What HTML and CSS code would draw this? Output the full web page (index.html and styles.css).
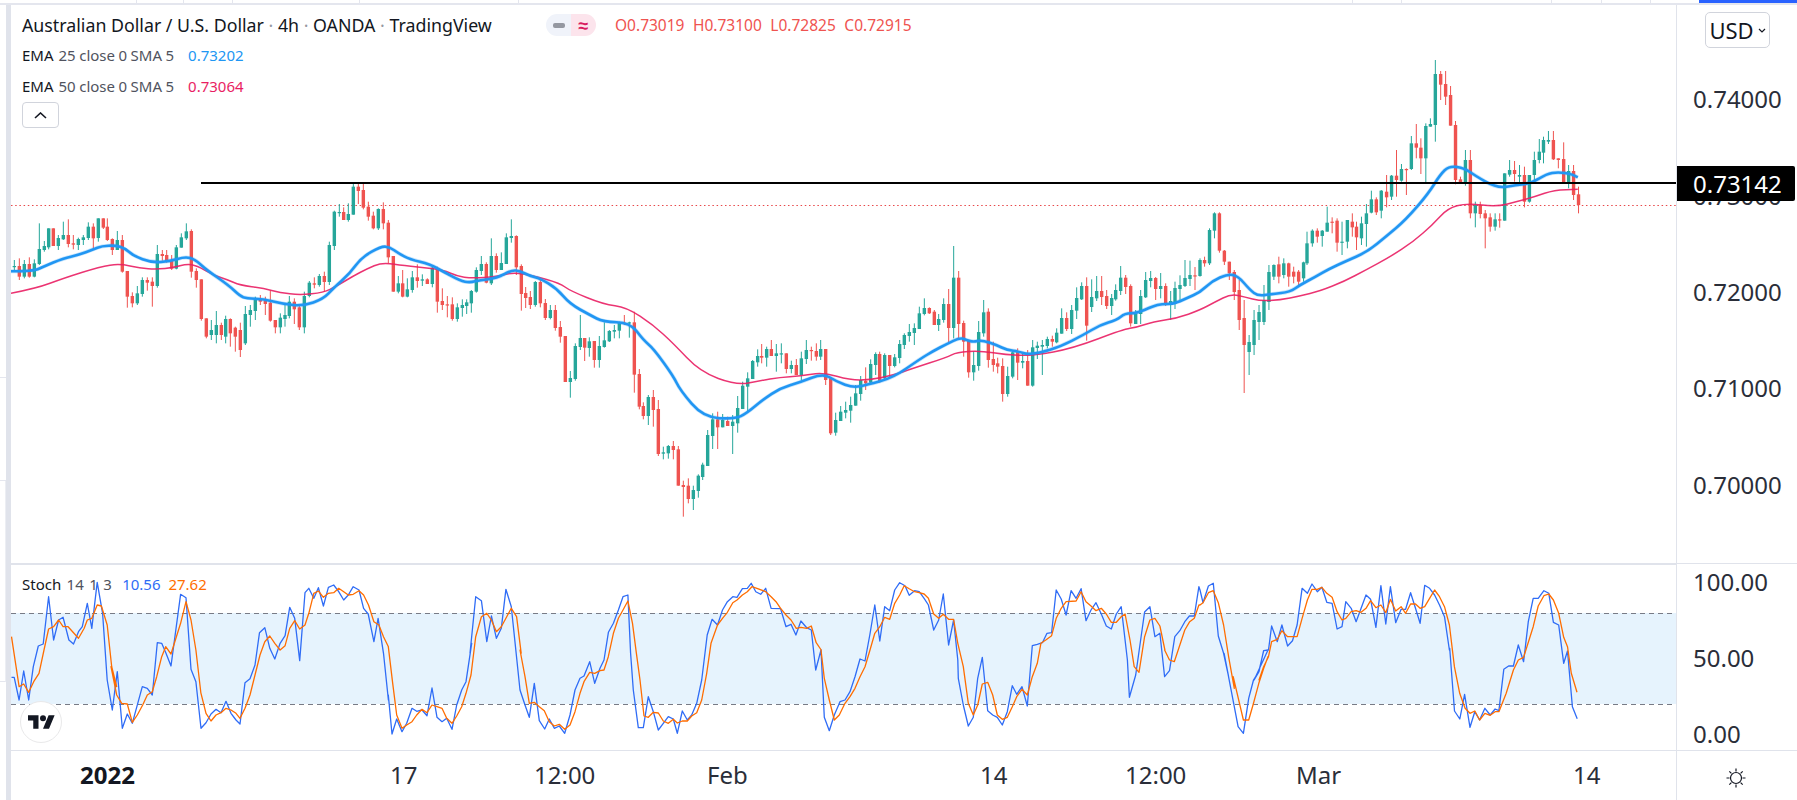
FILE: index.html
```html
<!DOCTYPE html>
<html lang="en">
<head>
<meta charset="utf-8">
<title>AUD/USD chart</title>
<link rel="stylesheet" href="styles.css">
</head>
<body>
<div class="app">
  <div class="topbar">
    <i class="tc c1"></i><i class="tc c2"></i><i class="tc c3"></i><i class="tc c4"></i><i class="tc c5"></i>
    <i class="tc c6"></i><i class="tc c7"></i><i class="tc c8"></i><i class="tc c9"></i><i class="tc c10"></i>
    <b class="progress"></b>
  </div>
  <div class="workspace">
    <div class="rail">
      <i class="rail-cell r1"></i><i class="rail-cell r2"></i><i class="rail-cell r3"></i><i class="rail-cell r4"></i>
    </div>
    <div class="rail-strip"></div>
    <div class="chart">
      <div class="plot">
        <svg class="canvas" viewBox="11 4 1665 746" width="1665" height="746" xmlns="http://www.w3.org/2000/svg">
          <rect class="band" x="11" y="613" width="1665" height="91"/>
          <line class="level" x1="11" y1="613.5" x2="1676" y2="613.5"/>
          <line class="level" x1="11" y1="704.5" x2="1676" y2="704.5"/>
          <line class="last-price" x1="11" y1="205.5" x2="1676" y2="205.5"/>
          <g id="candles"></g>
          <path id="ema50" class="ema50"/>
          <path id="ema25halo" class="ema25halo"/>
          <path id="ema25" class="ema25"/>
          <line class="trend" x1="201" y1="183" x2="1676" y2="183"/>
          <path id="stochK" class="stoch-k"/>
          <path id="stochD" class="stoch-d"/>
        </svg>
        <div class="legend">
          <div class="title-row">
            <span class="title">Australian Dollar / U.S. Dollar <em>·</em> 4h <em>·</em> OANDA <em>·</em> TradingView</span>
            <span class="pills"><span class="pill pill-grey"><i></i></span><span class="pill pill-pink">≈</span></span>
            <span class="ohlc">O0.73019 H0.73100 L0.72825 C0.72915</span>
          </div>
          <div class="study"><span class="nm">EMA</span> 25 close 0 SMA 5 <span class="val v-blue">0.73202</span></div>
          <div class="study"><span class="nm">EMA</span> 50 close 0 SMA 5 <span class="val v-pink">0.73064</span></div>
          <button class="collapse" type="button" aria-label="Collapse">
            <svg width="13" height="7" viewBox="0 0 13 7"><path d="M1 6l5.5-5L12 6" fill="none" stroke="#131722" stroke-width="1.6"/></svg>
          </button>
        </div>
        <div class="divider"></div>
        <div class="stoch-legend"><span class="nm">Stoch</span> 14 1 3 <span class="val v-k">10.56</span> <span class="val v-d">27.62</span></div>
        <div class="tv-logo">
          <svg width="27" height="14" viewBox="0 0 36 18" xmlns="http://www.w3.org/2000/svg"><path fill="#131722" d="M14 18H7V7H0V0h14v18zM28 18h-8L27.500 0h8L28 18z"/><circle fill="#131722" cx="20" cy="4" r="4"/></svg>
        </div>
      </div>
      <div class="price-axis">
        <button class="currency" type="button">USD<svg width="8" height="5" viewBox="0 0 8 5"><path d="M1 1l3 3 3-3" fill="none" stroke="#131722" stroke-width="1.2"/></svg></button>
        <div class="price-scale">
          <span>0.74000</span><span>0.73000</span><span>0.72000</span><span>0.71000</span><span>0.70000</span>
        </div>
        <div class="last-tag">0.73142</div>
        <div class="stoch-scale">
          <span>100.00</span><span>50.00</span><span>0.00</span>
        </div>
      </div>
      <div class="time-axis">
        <span class="year">2022</span><span>17</span><span>12:00</span><span>Feb</span><span>14</span><span>12:00</span><span>Mar</span><span>14</span>
      </div>
      <div class="corner">
        <svg width="22" height="22" viewBox="0 0 22 22" xmlns="http://www.w3.org/2000/svg">
          <g fill="none" stroke="#131722" stroke-width="1.2"><circle cx="11" cy="11" r="5.500"/><path d="M11 1.500v3M11 17.500v3M1.500 11h3M17.500 11h3M4.300 4.300l2.100 2.100M15.600 15.600l2.100 2.100M4.300 17.700l2.100-2.100M15.600 6.400l2.100-2.100"/></g>
        </svg>
      </div>
    </div>
  </div>
</div>
<script src="script.js"></script>
</body>
</html>
```
FILE: styles.css
```css
* { box-sizing: border-box; }
html, body { margin: 0; padding: 0; background: #fff; }
body { width: 1797px; height: 800px; overflow: hidden; font-family: "Noto Sans", "Liberation Sans", sans-serif; color: #131722; }
.app { display: flex; flex-direction: column; width: 1797px; height: 800px; }

.topbar { position: relative; display: flex; height: 5px; flex: none; border-bottom: 2px solid #e4e6ee; }
.tc { display: block; height: 3px; border-right: 1px solid #e4e6ee; flex: none; }
.c1 { width: 137px; } .c2 { width: 47px; } .c3 { width: 49px; } .c4 { width: 127px; } .c5 { width: 159px; }
.c6 { width: 834px; } .c7 { width: 49px; } .c8 { width: 150px; } .c9 { width: 50px; } .c10 { width: 49px; }
.progress { position: absolute; right: 0; top: 0; width: 98px; height: 3px; background: #2962ff; }

.workspace { display: flex; flex: 1; min-height: 0; }
.rail { width: 6px; flex: none; display: flex; flex-direction: column; }
.rail-cell { display: block; border-bottom: 1px solid #e4e6ee; }
.r1 { height: 373px; } .r2 { height: 103px; } .r3 { height: 201px; border-right: 1px solid #eceef3; } .r4 { flex: 1; border-bottom: 0; }
.rail-strip { width: 5px; flex: none; background: #e0e3eb; }

.chart { display: grid; grid-template-columns: 1665px 121px; grid-template-rows: 745px 50px; flex: 1; }
.plot { position: relative; grid-column: 1; grid-row: 1; }
.canvas { position: absolute; left: 0; top: -1px; display: block; overflow: hidden; }
.divider { position: absolute; left: 0; right: 0; top: 558px; height: 1.500px; background: #e0e3eb; }

.band { fill: #e6f3fd; }
.level { stroke: #787b86; stroke-width: 1; stroke-dasharray: 5 4; }
.last-price { stroke: #e8484a; stroke-width: 1; stroke-dasharray: 1.500 2.700; }
.trend { stroke: #000; stroke-width: 2; }
.ema25 { fill: none; stroke: #2196f3; stroke-width: 2.600; stroke-linejoin: round; }
.ema25halo { fill: none; stroke: #2196f3; stroke-opacity: .25; stroke-width: 4; stroke-linejoin: round; }
.ema50 { fill: none; stroke: #e91e63; stroke-width: 1.500; stroke-linejoin: round; stroke-opacity: .9; }
.stoch-k { fill: none; stroke: #2f6cf6; stroke-width: 1.300; stroke-linejoin: round; }
.stoch-d { fill: none; stroke: #ff6d00; stroke-width: 1.300; stroke-linejoin: round; }
.up { fill: #26a69a; }
.down { fill: #ef5350; }

.legend { position: absolute; left: 11px; top: 0; }
.title-row { display: flex; align-items: center; height: 34px; padding-top: 6px; white-space: nowrap; }
.title { font-size: 17.800px; width: 524px; flex: none; }
.title em { font-style: normal; color: #9598a1; }
.pills { display: flex; width: 50px; height: 22px; flex: none; }
.pill { width: 25px; display: flex; align-items: center; justify-content: center; }
.pill-grey { background: #f0f3fa; border-radius: 11px 0 0 11px; }
.pill-grey i { display: block; width: 12px; height: 5px; border-radius: 2px; background: #9598a1; }
.pill-pink { background: #fce4ec; border-radius: 0 11px 11px 0; color: #d81b60; font-size: 18px; font-weight: 700; line-height: 22px; }
.ohlc { margin-left: 19px; font-size: 15.500px; color: #ef5350; word-spacing: 4.500px; }
.study { display: flex; gap: 5px; height: 31px; align-items: center; font-size: 15px; color: #50535e; white-space: nowrap; word-spacing: -0.400px; }
.nm { color: #131722; }
.val { margin-left: 9px; }
.v-blue { color: #2196f3; }
.v-pink { color: #e91e63; }
.collapse { display: flex; align-items: center; justify-content: center; width: 37px; height: 26px; margin-top: 1px; padding: 0; background: #fff; border: 1px solid #d1d4dc; border-radius: 4px; }
.stoch-legend { position: absolute; left: 11px; top: 569px; font-size: 15px; color: #50535e; white-space: nowrap; word-spacing: 1.500px; }
.stoch-legend .val { margin-left: 5px; }
.stoch-legend .v-k { color: #2f6cf6; }
.stoch-legend .v-d { color: #ff6d00; margin-left: 2.500px; }
.tv-logo { position: absolute; left: 9px; top: 696px; width: 42px; height: 42px; display: flex; align-items: center; justify-content: center; border-radius: 50%; background: #fff; border: 1.500px solid #e9e9ea; }
.tv-logo svg { display: block; }

.price-axis { position: relative; grid-column: 2; grid-row: 1; display: flex; flex-direction: column; border-left: 1px solid #e0e3eb; font-size: 24px; color: #2a2e39; }
.price-scale { display: flex; flex-direction: column; height: 559px; padding-top: 46.300px; border-bottom: 1.500px solid #e0e3eb; }
.price-scale span { display: block; height: 96.400px; line-height: 96.400px; padding-left: 16px; }
.stoch-scale { display: flex; flex-direction: column; gap: 46px; padding-top: 3px; padding-left: 16px; }
.stoch-scale span { display: block; height: 30px; line-height: 30px; }
.last-tag { position: absolute; left: 0; top: 161px; width: 118px; height: 35px; line-height: 35px; padding-left: 16px; background: #000; color: #fff; border-radius: 0 2px 2px 0; }
.currency { position: absolute; left: 28px; top: 7px; width: 65px; height: 36px; display: flex; align-items: center; justify-content: center; gap: 4px; padding: 0; background: #fff; border: 1px solid #d1d4dc; border-radius: 5px; font: 22px "Noto Sans", sans-serif; color: #131722; }

.time-axis { grid-column: 1; grid-row: 2; display: grid; grid-template-columns: 310px 144px 173px 273px 145px 171px 277px 40px; padding-left: 69px; padding-bottom: 2px; align-items: center; height: 50px; border-top: 1.500px solid #e0e3eb; font-size: 24px; color: #2a2e39; white-space: nowrap; }
.year { font-weight: 700; color: #131722; }
.corner { grid-column: 2; grid-row: 2; display: flex; align-items: center; justify-content: center; height: 50px; border-top: 1.500px solid #e0e3eb; border-left: 1px solid #e0e3eb; padding-right: 2px; padding-top: 4px; }
```
FILE: script.js
```js
// Chart data, traced as coordinates on the plot. Each run gives its own frame: [x0, sx, y0, sy].
var F = {
  f: [0, 1, 0, 1],
  a: [0, 3, 170, 3], b: [400, 3, 170, 3], c: [560, 3, 340, 3], d: [800, 3, 170, 3], e: [1200, 2.626, 0, 3],
  s: [0, 2.613, 480, 3], t: [0, 3, 640, 3], u: [600, 2.613, 490, 3], v: [520, 3, 640, 3], w: [1200, 2.626, 480, 3], x: [1040, 2.07, 640, 3]
};

var candleRuns = [
  ['a', 'g43 270 288 290 305;r58 265 288 320 330;g73 270 282 320 325;r88 262 282 320 323;g103 268 280 320 322;g118 160 237 282 285;g133 213 228 240 245;g146 175 175 232 238;r160 175 175 228 228;g175 195 204 228 240;g190 155 195 208 210;r205 148 195 222 232;r220 195 220 224 238;g235 203 207 225 240;g250 195 202 210 225;g265 157 170 204 210;r280 160 170 205 240;g295 145 145 204 215;r310 145 145 173 177;r322 145 170 210 213;r337 205 207 240 255;g352 183 210 240 240;r367 195 210 305 308;r382 303 303 380 413;r397 367 378 400 412;g412 348 370 400 405;g427 322 330 372 380;r442 322 330 338 362;r457 322 335 348 410;g472 225 252 348 353;r487 240 252 258 272;r500 240 255 275 278;r515 255 270 296 300;g529 225 232 296 298;g544 190 202 233 233;g559 160 184 205 210;r574 178 183 305 323;r589 295 303 330 353;r604 328 328 447 452;r619 445 445 500 505;g634 450 480 495 510;g649 423 465 495 520;r664 458 465 495 510;g677 437 447 500 520;r691 445 447 490 530;r706 470 473 500 545;r721 458 480 540 561;g736 408 432 520 525;g751 405 420 435 470;g766 380 388 423 450;r781 375 388 395 405;r796 380 392 402 435;r811 362 398 452 455;r826 450 450 472 490;g841 430 443 472 490;g855 400 435 447 470;g868 378 395 438 445;r883 385 395 418 462;r898 405 412 472 480;g913 365 378 472 490;g928 333 338 378 382;r943 322 340 344 355;g958 312 318 345 350;r973 305 318 336 365;g988 215 225 336 345;g1003 122 125 228 240;g1018 102 126 128 140;r1031 112 126 150 150;g1045 100 132 150 155;g1060 40 50 134 134;r1075 40 50 63 102;r1090 40 60 113 118;r1105 95 110 140 152;r1120 125 137 175 178;g1135 115 117 175 180;r1150 97 117 160 178;r1165 150 158 262 280;r1180 258 258 365 365;g1195 318 340 365 370'],
  ['b', 'r8 300 340 380 382;g22 325 358 380 382;g37 303 322 360 368;r52 283 322 333 353;g67 313 328 332 348;r82 325 328 342 342;g97 288 293 342 352;r112 290 295 395 428;r127 355 393 405 420;r142 378 403 404 442;r157 382 403 447 452;g172 400 412 447 455;g187 388 405 414 440;g200 388 397 408 432;g214 360 363 400 428;g229 292 300 365 368;g244 258 282 303 315;r259 277 282 338 340;g274 205 258 340 345;r289 250 258 300 308;g304 247 279 300 300;g319 190 202 282 282;g334 148 198 204 218;r349 196 198 292 315;r364 283 288 372 422;r377 351 369 384 414;r391 363 381 405 417;g406 333 336 405 410;r421 328 336 400 412;r436 387 399 444 450;g451 405 420 444 448;r466 405 420 474 482;r481 453 471 500 518;r496 498 498 636 636;g511 603 624 636 683;g526 520 528 627 632;g541 435 504 531 540;r554 504 504 533 573;g568 502 514 534 560;r583 513 513 570 593;g598 498 528 570 593;g613 457 511 531 533;g628 480 483 514 516;g643 465 480 485 505;g658 455 459 482 505;r673 435 458 459 465;g688 455 457 460 503;r703 425 457 614 668;r718 597 612 710 718;r730 697 708 738 748;g745 675 681 738 765;r760 660 681 720 770;r775 690 717 852 858;g790 830 847 851 868;g805 825 828 850 866;r820 813 828 840 868'],
  ['c', 'r355 318 328 437 437;r370 422 435 441 530;r385 415 437 477 490;g400 437 450 477 510;g415 403 407 453 473;g428 368 374 411 420;g443 270 285 378 378;g458 220 238 288 327;r473 215 238 262 327;g488 222 240 262 262;r503 230 243 258 258;g518 225 245 258 342;g533 168 204 250 278;g548 125 137 207 207;g563 97 115 140 215;g578 60 63 117 117;g593 28 48 67 80;r605 12 48 53 70;g620 20 27 53 80;r634 0 27 48 48;g649 12 40 48 95;g664 10 40 42 70;r679 40 40 87 100;g694 62 75 87 100;r709 57 75 105 105;g724 35 55 105 120;g739 0 30 57 72;r754 20 30 32 62;r769 10 33 50 62;g782 0 27 50 60;r797 27 27 120 135;r812 115 115 280 285;g827 218 240 278 287;g842 198 215 243 243;g857 185 210 218 235;g872 170 195 212 248;g887 135 160 197 197;g902 108 120 162 182;r917 82 122 130 150;g932 58 72 128 130;g947 37 42 75 105;r959 35 42 125 128;g974 40 45 115 120;r989 45 45 78 112;g1004 42 52 78 82;g1019 0 12 54 70'],
  ['d', 'g313 490 495 525 537;g328 462 486 498 515;g343 460 474 489 525;g358 410 430 477 477;g373 385 414 432 436;r388 412 414 430 432;r403 420 425 465 465;g416 432 447 465 483;g431 385 402 450 458;r446 357 402 474 520;g461 228 323 474 505;r476 303 323 462 505;r491 452 459 515 560'],
  ['c', 'r1226 0 1 97 113;g1241 33 75 97 122;g1256 -57 -24 78 92;g1271 -120 -83 -20 -10;r1285 -95 -85 60 83;r1300 5 57 75 95;r1313 53 70 80 100;r1328 55 78 162 185;g1343 80 108 162 170;g1358 30 37 110 115;r1373 25 35 68 120;g1388 40 63 68 85;r1403 30 63 137 137;g1418 0 22 137 140;g1432 5 17 24 57;g1447 0 15 20 105'],
  ['d', 'g742 500 507 528 535;r757 497 507 515 530;g770 475 488 517 520;g785 415 444 491 491;r800 427 444 477 483;g815 405 420 477 492;g830 352 384 422 447;g845 337 348 388 390;r860 322 348 467 512;g875 328 381 411 426;g890 318 363 385 393;r905 318 363 381 405;r920 360 378 408 417;g935 372 384 408 435;g947 343 360 388 392;g962 288 323 363 375;r977 315 323 351 372;r992 343 348 460 470;g1007 420 432 462 462;g1022 360 378 432 462;g1037 306 330 382 384;g1052 303 324 333 352;r1067 321 324 357 390;g1082 309 348 357 385;r1097 340 348 405 408;g1112 363 393 405 450;g1125 335 354 402 417;g1140 316 345 357 395;g1155 270 324 348 351;g1170 272 315 327 348;r1185 291 316 317 360;g1200 265 270 318 320'],
  ['e', 'r12 770 780 790 800;g25 685 690 790 795;g38 637 640 692 715;r51 637 640 752 758;r64 750 752 785 795;r77 785 785 820 840;r90 810 816 876 900;r103 840 870 960 990;r116 900 954 1035 1179;g129 1005 1026 1056 1125;g142 930 960 1035 1065;g155 915 936 966 1020;g168 855 900 966 975;g181 795 816 906 930;g194 793 795 830 840;r207 770 793 830 850;g220 775 790 825 835;r233 788 790 830 860;r246 800 815 830 850;r259 810 815 845 860;g272 785 787 835 845;g281 695 730 790 795;g295 688 692 730 740;r308 685 692 710 728;g321 690 692 708 740;g334 620 668 695 695;r347 652 665 668 700;r360 655 662 728 755;g373 665 725 728 765;g387 660 660 725 745;r400 640 665 682 710;r411 665 680 712 750;g424 650 670 715 735;g437 612 640 672 740;g450 572 598 638 640;r463 592 598 637 645;g476 570 572 632 655;r490 525 575 592 622;g503 525 527 590 600;r516 450 527 540 590;g529 492 507 542 545;r542 505 507 510 585;g555 408 430 507 510;r568 372 430 443 475;r580 415 443 475 522;g593 370 378 475 547;g605 355 372 380 380;g618 180 222 375 425;r632 213 222 254 300;r645 213 252 290 315;r658 258 285 377 377;r671 363 375 540 553;r684 530 538 548 548;g697 450 480 550 557;r710 450 480 640 655;g723 605 615 640 682;r736 605 615 642 655;r749 630 640 655 745;r762 640 652 680 695;g775 640 658 680 692;r787 640 658 660 683;g800 520 520 662 662;g813 480 510 524 530;r826 483 510 522 545;g839 495 525 530 555;r852 500 525 605 622;g865 525 525 605 608;g878 455 480 525 540;g891 417 455 480 490;g902 410 420 458 490;g915 393 420 425 432;r928 393 420 478 480;r941 475 475 480 505;r955 427 477 550 552;g968 495 513 550 565;r981 495 513 585 600;r994 560 583 615 640']
];

var ema25 = 'a:33,304 100,304 130,290 190,265 235,255 280,238 305,228 345,226 375,235 400,257 455,278 510,274 555,260 585,268 620,300 685,345 720,378 740,385 790,387 850,402 910,408 970,387 1000,355 1050,310 1085,262 1145,228 1170,232 1195,250|b:30,268 90,283 130,305 180,332 210,338 240,330 290,325 335,300 360,303 390,318 420,325 470,355 510,402 570,435 610,456 690,458 730,510 760,535 820,618 840,660 910,742 1005,747 1040,730 1090,688 1140,655 1200,637|c:790,100 830,125 880,143 920,135 1000,113 1080,57|d:400,543 440,522 480,503 500,510 520,516 545,510 590,525 620,540 660,545 680,553 720,548 780,530 850,495 900,465 950,450 975,430 1010,430 1060,408 1085,402 1120,402 1160,385 1200,367|f:1212,281 1228,274 1238,276 1250,290 1258,296 1272,294 1290,292 1300,285 1315,277|e:340,806 380,785 440,755 490,708 540,660 600,580 630,525 655,497 695,505 720,525 780,565 830,555 870,550 910,522 940,516 975,522 992,532';
var ema50 = 'a:33,370 110,355 190,325 300,290 360,281 420,295 470,298 520,293 560,282 590,287 640,315 680,328 720,346 790,355 840,368 900,375 970,368 1010,348 1060,318 1100,297 1145,278 1195,285|b:70,293 130,300 170,318 215,325 290,320 340,307 400,317 480,340 510,362 610,403 680,412 760,465 820,520 900,605 1010,646 1080,632 1140,622 1200,618|c:790,97 870,120 930,120 1000,105 1060,85 1160,52 1190,37 1260,32 1340,45 1420,47 1540,25|d:970,478 1010,472 1060,455 1130,445 1200,420|f:1215,302 1231,294 1245,297 1260,301 1280,300 1300,296 1320,291 1345,281|e:435,810 500,770 560,725 610,675 650,625 700,610 780,620 830,605 880,590 930,570 992,568';

var stochK = 's:30,592 37,592 50,660 62,573 75,660 87,560 100,498 113,492 127,350 140,480 153,420 165,412 180,480 192,492 205,455 215,440 228,370 240,445 254,307 268,400 280,600|t:337,210 352,95 367,265 382,222 397,250 427,140 442,145 457,165 472,8 485,10 498,40 513,78|s:472,343 486,353 499,568 512,605|t:603,265 618,248 633,222 648,208 663,218 678,184 693,220 708,240 720,252 735,128 750,116 765,75|s:678,458 692,443 705,505 718,537 732,490 745,467 757,382 770,415 783,542 797,338 807,325 820,355 832,323 845,378 858,322 872,315 885,335 898,360 910,345 923,320 938,330 950,385 962,402 977,485 988,415 1002,520 1015,660|t:1165,165 1176,282 1190,237 1206,275 1220,250 1236,205 1250,214 1266,210 1281,227 1296,144 1311,232 1326,245 1340,235 1356,268 1370,195 1385,150 1398,125 1415,10|s:1228,520 1243,350 1258,362 1272,485 1284,408 1297,475 1310,445 1322,328 1336,380|v:0,150 15,195 28,232 43,130 58,242 74,267 88,237 103,265 118,258 134,280 150,225 165,150 180,115 192,108 209,65 224,130 240,85 252,60|u:22,427 35,400 48,360 60,320 73,315 80,490|v:340,150 355,263 370,263 385,170 400,215 415,270 430,250 445,230 460,237 472,280 487,213 502,240 515,225 530,190 545,120|u:280,435 293,388 307,405 320,360 333,335 347,320 358,322 372,296 385,295 395,280 407,305 420,313 433,295 447,355 472,356 486,410 499,403 512,435 525,393 540,413 552,420|v:887,90 903,30 913,232 928,272 943,225 960,185 975,180 990,155 1005,110 1020,57 1035,63|u:705,435 718,345 731,453 744,350 757,362 770,300 783,278 797,287 808,316 822,302 834,305 847,325 858,345 872,420 885,390 897,312 911,465 924,390 935,510|v:1315,115 1330,195 1345,258 1360,232 1373,115 1387,52 1403,212 1418,225 1432,232 1447,255 1462,215 1477,137 1490,163 1506,140 1522,198 1537,17 1552,13|u:1156,458 1168,430 1180,428 1192,300 1205,327 1218,375 1231,302 1244,325 1257,296 1270,392 1283,360 1296,338 1310,372 1323,408 1336,417 1349,372 1362,350 1378,510|x:185,172 198,105|u:1423,366 1437,350 1450,440 1463,430|x:258,110 268,92|u:1502,440 1515,422 1528,395 1540,378 1553,378 1565,290|w:0,330 8,368 22,318 35,310 48,468 62,520 75,590|x:381,40 410,260 421,280 432,175 442,120 453,95 463,32 472,30|w:142,600 155,575 167,512 180,510 188,438 203,485 215,435 230,498 243,482 255,435 268,325 282,340 294,312 308,335 320,322 333,367 347,370 360,447 373,440 383,365 397,385 410,425 423,385 436,345 448,358 462,442 475,317 488,432 500,320 514,428 528,388 540,388 553,338 566,385 578,430 590,316 603,325 616,345 629,375 642,410 655,510|x:848,25 858,213 869,237 879,163 890,262 900,215 910,240 921,205 932,225 942,207 950,212 960,88 970,78 980,78 990,15 1001,65|w:862,425 875,355 888,355 903,332 916,340 928,427 942,435 955,550 965,513|x:1084,70 1092,33 1102,200 1112,236';
var stochD = 's:30,470 50,620 62,612 75,637 88,605 102,580 115,510 127,447 140,440 153,420 165,440 178,440 205,475 220,445 228,420 240,415 254,375 265,378 280,435 292,560 305,620|t:333,80 350,165 365,190 382,192 397,247 412,225 428,195 442,165 457,155 470,110 485,50 497,20 513,42|s:472,430 486,365 499,420 512,510 525,640|t:603,160 618,220 633,243 648,225 663,218 678,205 693,210 708,220 720,235 735,205 750,165 765,105 780,45|s:692,485 705,468 718,490 732,510 745,497 757,445 770,422 783,447 797,435 807,400 820,340 832,333 845,352 858,340 872,338 885,325 898,335 910,345 923,343 938,332 950,345 963,375 977,425 990,435 1002,470 1015,500|t:1165,20 1178,130 1190,225 1206,265 1220,255 1236,245 1250,225 1266,208 1281,218 1296,195 1311,200 1326,205 1340,235 1356,250 1370,228 1385,200 1398,160 1413,105|s:1243,470 1258,410 1272,400 1284,420 1297,455 1310,440 1322,415 1336,385 1350,410 1362,520|v:0,30 15,110 28,190 43,187 58,200 73,212 88,245 103,258 118,253 134,268 150,255 165,215 180,160 192,125 209,97 224,100 240,92 252,90 265,50|u:35,430 48,385 60,360 73,333 85,400 95,490|v:360,120 372,228 385,232 400,217 415,219 430,243 445,250 460,238 472,249 487,243 502,243 515,228 530,218 545,180 560,100|u:290,460 307,405 320,385 333,367 347,338 358,330 372,315 385,305 397,290 410,295 433,305 447,320 460,335 472,355 486,375 499,390 513,415 525,412 540,415 552,408 565,458 578,480|v:903,30 913,115 928,180 943,240 958,225 975,190 990,170 1005,145 1020,110 1035,80 1050,30|u:718,430 731,410 744,382 757,388 770,340 783,315 795,287 808,296 822,305 834,308 847,312 858,325 872,372 885,385 897,373 911,388 924,388 935,460|v:1330,80 1345,190 1360,225 1373,195 1387,132 1403,127 1418,165 1432,225 1447,238 1462,232 1477,200 1490,170 1506,148 1522,165 1537,110 1552,70|u:1152,460 1165,450 1180,437 1192,385 1205,355 1218,335 1244,333 1257,305 1270,335 1283,348 1296,362 1310,355 1323,372 1336,397 1349,397 1362,380 1372,372 1385,450|x:195,80 205,97|u:1423,440 1437,390 1450,385 1463,408 1476,480|x:258,30 268,60 278,65|u:1528,420 1541,395 1553,385 1565,345|w:0,375 8,368 22,338 35,332 48,368 62,435 75,530 90,625|x:400,110 421,240 432,240 442,190 453,130 463,85 472,50|w:155,600 167,560 180,530 188,485 203,478 215,452 230,470 255,470 268,415 282,360 294,328 308,328 320,322 333,340 347,352 360,395 373,420 383,415 397,395 410,392 423,397 436,385 448,362 462,383 475,375 488,398 500,358 514,393 528,380 540,400 553,372 566,372 578,385 590,380 603,355 616,330 629,350 642,380 655,435 668,560 682,640|x:870,165 880,205 890,220 900,213 910,240 921,220 932,226 942,215 950,215 965,160 980,90 990,60 1001,52|w:875,440 888,378 903,347 916,342 928,360 942,400 955,472 965,500 975,580 990,637';

function px(f, x) { return F[f][0] + x / F[f][1]; }
function py(f, y) { return F[f][2] + y / F[f][3]; }

function pointsFrom(spec) {
  var out = [];
  spec.split('|').forEach(function (run) {
    var parts = run.split(':'), f = parts[0];
    parts[1].split(' ').forEach(function (pt) {
      var v = pt.split(',');
      out.push([px(f, +v[0]), py(f, +v[1])]);
    });
  });
  return out;
}
function fmt(p) { return p[0].toFixed(1) + ' ' + p[1].toFixed(1); }
function linePath(spec) { return 'M' + pointsFrom(spec).map(fmt).join('L'); }
// Moving averages are rounded through the midpoints of the traced points.
function smoothPath(spec) {
  var p = pointsFrom(spec), d = 'M' + fmt(p[0]);
  for (var i = 1; i < p.length - 1; i++) {
    d += 'Q' + fmt(p[i]) + ' ' + fmt([(p[i][0] + p[i + 1][0]) / 2, (p[i][1] + p[i + 1][1]) / 2]);
  }
  return d + 'L' + fmt(p[p.length - 1]);
}

var NS = 'http://www.w3.org/2000/svg';
var host = document.getElementById('candles');
function bar(cls, x, y, w, h) {
  var r = document.createElementNS(NS, 'rect');
  r.setAttribute('class', cls);
  r.setAttribute('x', x.toFixed(2));
  r.setAttribute('y', y.toFixed(2));
  r.setAttribute('width', w);
  r.setAttribute('height', Math.max(h, 1.2).toFixed(2));
  host.appendChild(r);
}
candleRuns.forEach(function (run) {
  var f = run[0];
  run[1].split(';').forEach(function (c) {
    var cls = c.charAt(0) === 'g' ? 'up' : 'down';
    var v = c.slice(1).split(' ').map(Number);
    var x = px(f, v[0]);
    var hi = py(f, v[1]), top = py(f, v[2]), bot = py(f, v[3]), lo = py(f, v[4]);
    bar(cls, x - 0.5, hi, 1, lo - hi);
    bar(cls, x - 1.7, top, 3.4, bot - top);
  });
});

document.getElementById('ema25').setAttribute('d', smoothPath(ema25));
document.getElementById('ema25halo').setAttribute('d', smoothPath(ema25));
document.getElementById('ema50').setAttribute('d', smoothPath(ema50));
document.getElementById('stochK').setAttribute('d', linePath(stochK));
document.getElementById('stochD').setAttribute('d', linePath(stochD));
```
